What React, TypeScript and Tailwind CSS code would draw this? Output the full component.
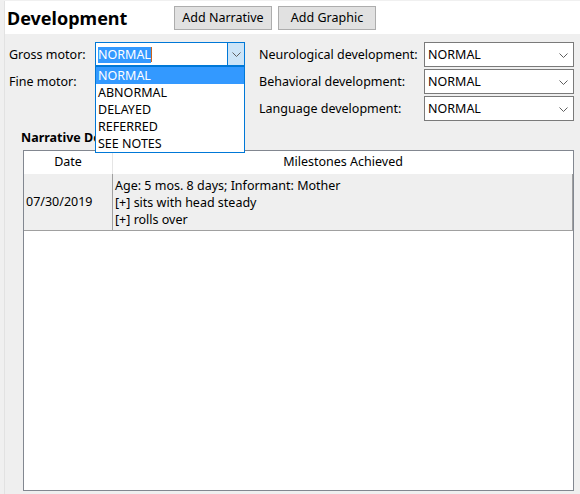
const font = { fontFamily: '"Noto Sans", "Open Sans", sans-serif' }

const Chevron = ({ className = '' }: { className?: string }) => (
    <svg className={className} width="9" height="5" viewBox="0 0 9 5" fill="none">
        <path d="M0.5 0.5L4.5 4.5L8.5 0.5" stroke="#5f5f5f" strokeWidth="1" />
    </svg>
)

const Select = ({ value }: { value: string }) => (
    <div className="flex h-[25px] w-[150px] items-center justify-between border border-[#7a7a7a] bg-white pl-[3px] pr-[5px] pt-[1px]">
        <span>{value}</span>
        <Chevron />
    </div>
)

const options = ['NORMAL', 'ABNORMAL', 'DELAYED', 'REFERRED', 'SEE NOTES']

export default function App() {
    return (
        <div className="h-[494px] w-[580px] bg-[#f0f0f0] pl-[4px] pt-[1px] text-[12.5px] text-black" style={font}>
            <div className="flex h-full flex-col border-l border-[#e2e2e2]">
                {/* Header */}
                <div className="flex h-[33px] items-center bg-white pl-[2px]">
                    <h1 className="w-[167px] text-[18px] font-bold leading-none">Development</h1>
                    <div className="flex gap-[6px] pt-[1px]">
                        <button className="h-[24px] w-[98px] border border-[#adadad] bg-[#e1e1e1]">Add Narrative</button>
                        <button className="h-[24px] w-[98px] border border-[#adadad] bg-[#e1e1e1]">Add Graphic</button>
                    </div>
                </div>

                {/* Body */}
                <div className="flex flex-1 flex-col bg-[#efefef] pl-[4px] pr-[6px] pt-[8px]">
                    <div className="flex items-start">
                        <div className="grid w-[252px] grid-cols-[86px_150px] content-start gap-y-[2px]">
                            <div className="flex h-[25px] items-center pt-[1px]">Gross motor:</div>
                            <div className="relative">
                                <div className="flex h-[24px] w-[150px] items-stretch border border-[#0078d7] bg-white">
                                    <div className="flex flex-1 items-center pl-[2px] pt-[1px]">
                                        <span className="bg-[#3399ff] leading-[16px] text-white">NORMAL</span>
                                        <span className="h-[15px] w-[1px] bg-[#c8641e]" />
                                    </div>
                                    <div className="flex w-[17px] items-center justify-center border-l border-[#0078d7] bg-[#cce4f7]">
                                        <Chevron />
                                    </div>
                                </div>
                                {/* open dropdown list */}
                                <ul className="absolute left-0 top-[24px] z-10 w-[150px] border border-[#0078d7] bg-white">
                                    {options.map((o, i) => (
                                        <li
                                            key={o}
                                            className={`flex h-[17px] items-center pl-[2px] pt-[2px] ${i === 0 ? 'bg-[#3399ff] text-white' : ''}`}
                                        >
                                            {o}
                                        </li>
                                    ))}
                                </ul>
                            </div>
                            <div className="flex h-[25px] items-center pt-[1px]">Fine motor:</div>
                            <Select value="NORMAL" />
                        </div>
                        <div className="grid grid-cols-[165px_150px] gap-y-[2px]">
                            <div className="flex h-[25px] items-center pt-[1px]">Neurological development:</div>
                            <Select value="NORMAL" />
                            <div className="flex h-[25px] items-center pt-[1px]">Behavioral development:</div>
                            <Select value="NORMAL" />
                            <div className="flex h-[25px] items-center pt-[1px]">Language development:</div>
                            <Select value="NORMAL" />
                        </div>
                    </div>

                    <div className="mt-[8px] pl-[12px] text-[12.5px] font-bold leading-[17px]">Narrative Development</div>

                    <div className="mb-[3px] ml-[14px] mt-[4px] flex flex-1 flex-col border border-[#828790] bg-white">
                        <div className="flex h-[23px] items-center">
                            <div className="flex h-full w-[89px] items-center justify-center border-r border-[#e5e5e5]">Date</div>
                            <div className="flex-1 text-center">Milestones Achieved</div>
                        </div>
                        <div className="flex h-[57px] border-b border-r border-[#a0a0a0] bg-[#efefef]">
                            <div className="flex w-[89px] items-center border-r border-[#a0a0a0] pl-[2px]">07/30/2019</div>
                            <div className="flex flex-col justify-center pl-[2px] leading-[17px]">
                                <span>Age: 5 mos. 8 days; Informant: Mother</span>
                                <span>[+] sits with head steady</span>
                                <span>[+] rolls over</span>
                            </div>
                        </div>
                    </div>
                </div>
            </div>
        </div>
    )
}
